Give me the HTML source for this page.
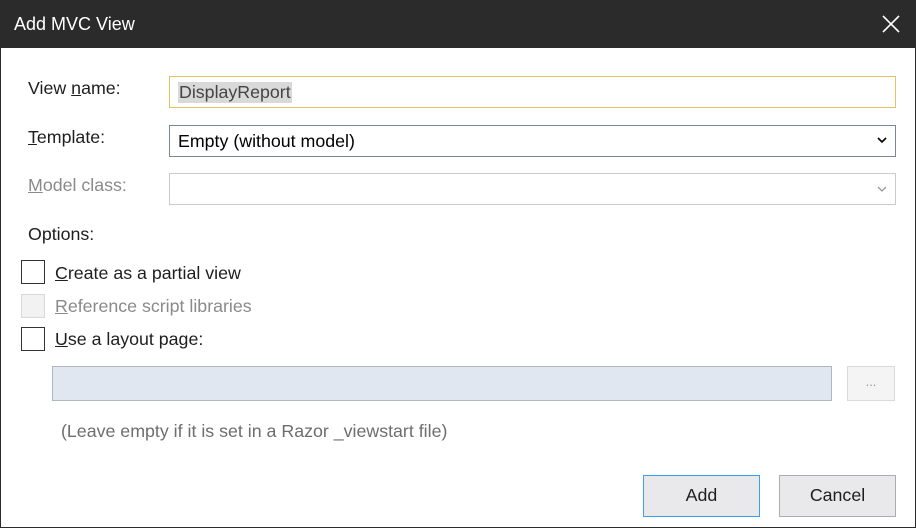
<!DOCTYPE html>
<html><head><style>
body{margin:0;width:916px;height:528px;overflow:hidden;font-family:"Liberation Sans",sans-serif;font-size:17.8px;color:#1e1e1e;}
.win{position:absolute;left:0;top:0;width:914px;height:526px;border:1px solid #2b2b2b;background:#fff;}
.title{position:absolute;left:0;top:0;width:914px;height:47px;background:#2b2b2b;color:#fff;}
.title span{position:absolute;left:13px;top:13px;font-size:18px;}
.a{position:absolute;white-space:nowrap;}
.box{position:absolute;box-sizing:border-box;}
u{text-decoration:underline;}
.cb{position:absolute;box-sizing:border-box;width:24px;height:24px;border:1px solid #333;background:#fff;}
.btn{position:absolute;box-sizing:border-box;background:#e9e9eb;text-align:center;line-height:38px;}
</style></head><body>
<div class="win">
<div class="title"><span>Add MVC View</span>
<svg style="position:absolute;left:881px;top:14px" width="18" height="18"><path d="M1 1L17 17M17 1L1 17" stroke="#fff" stroke-width="1.6"/></svg></div>
<div class="a" style="left:27px;top:77px">View <u>n</u>ame:</div>
<div class="box" style="left:168px;top:75px;width:727px;height:32px;border:1px solid #e5c365;background:#fff"><span style="position:absolute;left:8px;top:5px;background:#d9d9d9;color:#444;padding:0 1px">DisplayReport</span></div>
<div class="a" style="left:27px;top:126px"><u>T</u>emplate:</div>
<div class="box" style="left:168px;top:124px;width:727px;height:32px;border:1px solid #7a8596;background:#fff"><span style="position:absolute;left:8px;top:5px;color:#000">Empty (without model)</span>
<svg style="position:absolute;right:8px;top:11px" width="10" height="7"><path d="M1 1L5 5L9 1" stroke="#000" stroke-width="1.6" fill="none"/></svg></div>
<div class="a" style="left:27px;top:174px;color:#8a8a8a"><u>M</u>odel class:</div>
<div class="box" style="left:168px;top:172px;width:727px;height:32px;border:1px solid #c8ccd2;background:#fff">
<svg style="position:absolute;right:8px;top:12px" width="10" height="7"><path d="M1 1L5 5L9 1" stroke="#999" stroke-width="1.3" fill="none"/></svg></div>
<div class="a" style="left:27px;top:223px">Options:</div>
<div class="cb" style="left:20px;top:259px"></div>
<div class="a" style="left:54px;top:262px"><u>C</u>reate as a partial view</div>
<div class="cb" style="left:20px;top:293px;border-color:#d8d8d8;background:#f2f2f2"></div>
<div class="a" style="left:54px;top:295px;color:#8a8a8a"><u>R</u>eference script libraries</div>
<div class="cb" style="left:20px;top:326px"></div>
<div class="a" style="left:54px;top:328px"><u>U</u>se a layout page:</div>
<div class="box" style="left:51px;top:365px;width:780px;height:35px;border:1px solid #b0b7c0;background:#e1e7f0"></div>
<div class="box" style="left:846px;top:365px;width:48px;height:35px;border:1px solid #dadada;background:#f4f4f4;color:#999;text-align:center;font-size:13px;line-height:30px">...</div>
<div class="a" style="left:60px;top:420px;color:#6d6d6d">(Leave empty if it is set in a Razor _viewstart file)</div>
<div class="btn" style="left:642px;top:474px;width:117px;height:42px;border:1px solid #3c9fe8">Add</div>
<div class="btn" style="left:778px;top:474px;width:117px;height:42px;border:1px solid #adadad">Cancel</div>
</div>
</body></html>
